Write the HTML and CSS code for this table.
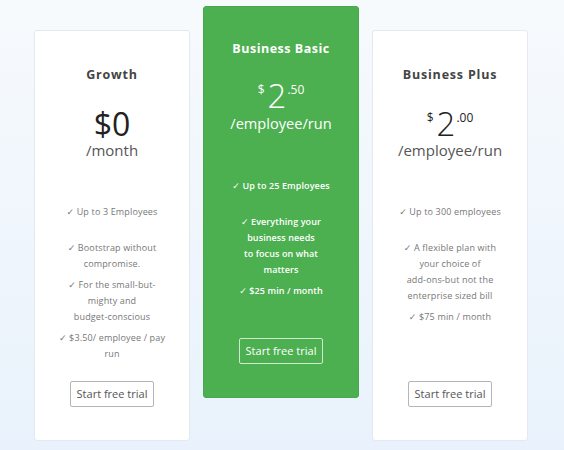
FILE: index.html
```html
<!DOCTYPE html>
<html>
<head>
<meta charset="utf-8">
<link rel="stylesheet" href="styles.css">
</head>
<body>
<div class="plans">
  <div class="card">
    <h3 class="title">Growth</h3>
    <div class="price"><span class="big">$0</span></div>
    <div class="per">/month</div>
    <ul class="features">
      <li class="first">✓ Up to 3 Employees</li>
      <li>✓ Bootstrap without<br>compromise.</li>
      <li>✓ For the small-but-<br>mighty and<br>budget-conscious</li>
      <li>✓ $3.50/ employee / pay<br>run</li>
    </ul>
    <a class="btn">Start free trial</a>
  </div>
  <div class="card featured">
    <h3 class="title">Business Basic</h3>
    <div class="price"><sup class="cur">$</sup><span class="big thin">2</span><sup class="cents">.50</sup></div>
    <div class="per">/employee/run</div>
    <ul class="features">
      <li class="first">✓ Up to 25 Employees</li>
      <li>✓ Everything your<br>business needs<br>to focus on what<br>matters</li>
      <li>✓ $25 min / month</li>
    </ul>
    <a class="btn">Start free trial</a>
  </div>
  <div class="card">
    <h3 class="title">Business Plus</h3>
    <div class="price"><sup class="cur">$</sup><span class="big thin">2</span><sup class="cents">.00</sup></div>
    <div class="per">/employee/run</div>
    <ul class="features">
      <li class="first">✓ Up to 300 employees</li>
      <li>✓ A flexible plan with<br>your choice of<br>add-ons-but not the<br>enterprise sized bill</li>
      <li>✓ $75 min / month</li>
    </ul>
    <a class="btn">Start free trial</a>
  </div>
</div>
</body>
</html>
```

FILE: styles.css
```css
html, body {
  margin: 0;
  padding: 0;
}
body {
  width: 564px;
  height: 450px;
  overflow: hidden;
  background: linear-gradient(180deg, #f7fafd 0%, #eef5fc 60%, #e9f2fc 100%);
  font-family: "Open Sans", "DejaVu Sans", sans-serif;
  color: #444;
}
.plans {
  display: flex;
  align-items: flex-start;
  gap: 13px;
  padding: 6px 0 0 34px;
}
.card {
  box-sizing: border-box;
  width: 156px;
  height: 411px;
  margin-top: 24px;
  background: #fff;
  border: 1px solid #e3e9f0;
  border-radius: 3px;
  display: flex;
  flex-direction: column;
  align-items: center;
  text-align: center;
  padding: 35px 6px 33px;
}
.card.featured {
  margin-top: 0;
  height: 392px;
  background: #4caf50;
  border-color: #48a84c;
  color: #fff;
  padding-top: 33px;
}
.title {
  margin: 0;
  font-size: 12.5px;
  font-weight: 700;
  letter-spacing: 0.8px;
  line-height: 18px;
  color: #444;
}
.featured .title {
  color: #fff;
  letter-spacing: 0.5px;
}
.price {
  margin-top: 23px;
  height: 34px;
  line-height: 34px;
  display: flex;
  align-items: flex-start;
  justify-content: center;
  color: #222;
}
.featured .price {
  margin-top: 21px;
  color: #fff;
}
.big {
  font-size: 32px;
  font-weight: 400;
}
.big.thin {
  font-size: 33px;
  font-weight: 300;
}
.cur, .cents {
  font-size: 12px;
  line-height: 12px;
  vertical-align: top;
  margin-top: 5px;
}
.cur {
  margin-right: 3px;
}
.cents {
  margin-left: 1px;
}
.per {
  font-size: 15px;
  line-height: 18px;
  margin-top: 0;
  color: #555;
}
.featured .per {
  color: #fff;
  margin-top: 1px;
  font-size: 14.6px;
}
.features {
  list-style: none;
  margin: 45px 0 0;
  padding: 0;
  font-size: 9px;
  line-height: 16px;
  letter-spacing: 0.15px;
  color: #777;
}
.featured .features {
  margin-top: 46px;
  color: #fff;
  font-weight: 600;
  letter-spacing: 0.1px;
}
.features li {
  margin-bottom: 5px;
}
.features li.first {
  margin-bottom: 20px;
}
.btn {
  margin-top: auto;
  box-sizing: border-box;
  width: 84px;
  height: 26px;
  line-height: 24px;
  border: 1px solid #b5b5b5;
  border-radius: 2px;
  font-size: 11px;
  color: #555;
  cursor: pointer;
}
.featured .btn {
  border-color: #cfe9d0;
  color: #fff;
}
```
